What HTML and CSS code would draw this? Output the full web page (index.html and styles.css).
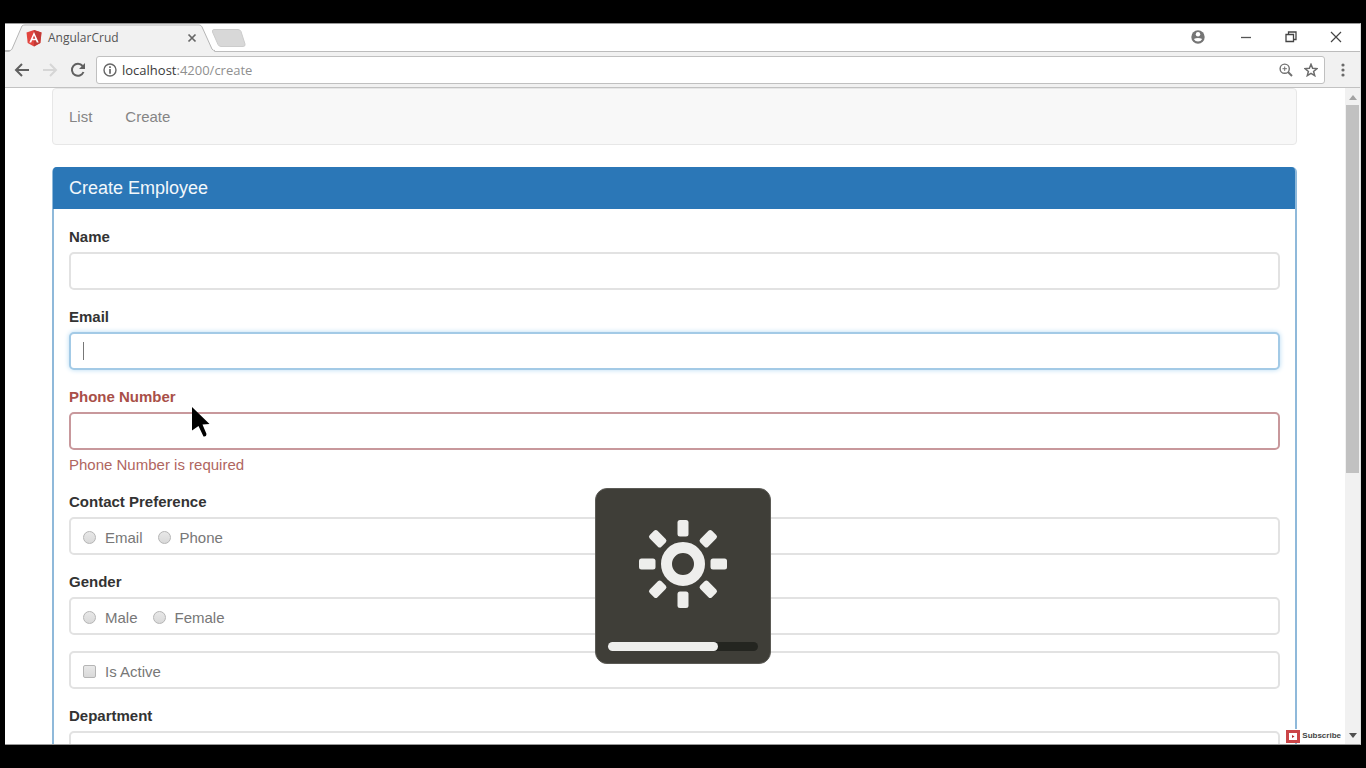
FILE: index.html
```
<!DOCTYPE html>
<html lang="en">
<head>
<meta charset="utf-8">
<title>AngularCrud</title>
<link rel="stylesheet" href="styles.css">
</head>
<body>
<div class="window">
  <header class="titlebar">
    <div class="tab">
      <svg class="tab-shape" viewBox="0 0 210 29" preserveAspectRatio="none"><path d="M4 29 6 27.500 17 2Q18 1 20 1H194Q196 1 197 3L208 27.500 210 29Z" fill="#f1f1f1"/><path d="M0 27.500H5Q6 27.500 7 26L17 2Q18 1 20 1H194Q196 1 197 3L207 26Q208 27.500 210 27.500" fill="none" stroke="#b5b5b5"/></svg>
      <svg class="logo" viewBox="0 0 16 17"><path d="M8 0 15.500 2.600 14.300 13 8 16.600 1.700 13 .5 2.600Z" fill="#e2453f"/><path d="M8 0 15.500 2.600 14.300 13 8 16.600Z" fill="#c23a36"/><path d="M8 2 3.300 12.600H5.200L6.100 10.200H9.900L10.800 12.600H12.700ZM8 5.600 9.300 8.700H6.700Z" fill="#fff" fill-rule="evenodd"/></svg>
      <span class="tab-title">AngularCrud</span>
      <button class="tab-close" aria-label="Close tab"><svg width="10" height="10" viewBox="0 0 10 10"><path d="M1.500 1.500 8.500 8.500M8.500 1.500 1.500 8.500" stroke="#666" stroke-width="1.700"/></svg></button>
    </div>
    <button class="new-tab" aria-label="New tab"><svg width="36" height="18" viewBox="0 0 36 18"><path d="M3 .5H27Q29 .5 30 2.500L34 15Q34.500 17.500 32 17.500H10Q8 17.500 7 15.500L1.500 3Q1 .5 3 .5Z" fill="#d8d8d8" stroke="#cccccc"/></svg></button>
    <div class="controls">
      <button aria-label="Profile"><svg width="14" height="14" viewBox="0 0 14 14"><circle cx="7" cy="7" r="6.700" fill="#757575"/><circle cx="7" cy="4.300" r="2.200" fill="#fff"/><path d="M2.800 9Q7 6.800 11.200 9Q9.800 11.600 7 11.600T2.800 9Z" fill="#fff"/></svg></button>
      <button aria-label="Minimize"><svg width="12" height="12" viewBox="0 0 12 12"><path d="M1 6.500H11" stroke="#555" stroke-width="1.300"/></svg></button>
      <button aria-label="Restore"><svg width="12" height="12" viewBox="0 0 12 12"><path d="M1 3.500H8.500V10.500H1ZM3.500 3V1H11V8.500H9" fill="none" stroke="#444" stroke-width="1.300"/></svg></button>
      <button aria-label="Close"><svg width="12" height="12" viewBox="0 0 12 12"><path d="M1 1 11 11M11 1 1 11" stroke="#444" stroke-width="1.200"/></svg></button>
    </div>
  </header>
  <div class="toolbar">
    <button aria-label="Back"><svg width="16" height="16" viewBox="0 0 16 16"><path d="M15 8H2M8 2 2 8 8 14" fill="none" stroke="#606060" stroke-width="2"/></svg></button>
    <button aria-label="Forward"><svg width="16" height="16" viewBox="0 0 16 16"><path d="M1 8H14M8 2 14 8 8 14" fill="none" stroke="#d6d6d6" stroke-width="2"/></svg></button>
    <button aria-label="Reload"><svg width="16" height="16" viewBox="0 0 16 16"><path d="M13.500 10A6 6 0 1 1 12.600 4" fill="none" stroke="#606060" stroke-width="2"/><path d="M15 1V7H9Z" fill="#606060"/></svg></button>
    <div class="address">
      <svg width="14" height="14" viewBox="0 0 14 14"><circle cx="7" cy="7" r="6" fill="none" stroke="#666" stroke-width="1.400"/><path d="M7 6V10.800M7 3.200V5" stroke="#666" stroke-width="1.700"/></svg>
      <span class="url"><b>localhost</b>:4200/create</span>
      <button aria-label="Zoom"><svg width="14" height="14" viewBox="0 0 14 14"><circle cx="5.700" cy="5.700" r="4.600" fill="none" stroke="#707070" stroke-width="1.400"/><path d="M3.500 5.700H7.900M5.700 3.500V7.900" stroke="#707070"/><path d="M9 9 13 13" stroke="#707070" stroke-width="1.900"/></svg></button>
      <button aria-label="Bookmark"><svg width="14" height="14" viewBox="0 0 14 14"><path d="M7 1.300 8.600 5.200 12.900 5.600 9.600 8.400 10.700 12.600 7 10.300 3.300 12.600 4.400 8.400 1.100 5.600 5.400 5.200Z" fill="none" stroke="#6c6c6c" stroke-width="1.500"/></svg></button>
    </div>
    <button class="menu" aria-label="Menu"><svg width="4" height="14" viewBox="0 0 4 14"><g fill="#6a6a6a"><circle cx="2" cy="2" r="1.600"/><circle cx="2" cy="7" r="1.600"/><circle cx="2" cy="12" r="1.600"/></g></svg></button>
  </div>
  <div class="viewport">
    <main class="page">
      <nav class="navbar"><a href="#list">List</a><a href="#create">Create</a></nav>
      <form class="panel">
        <h1 class="panel-heading">Create Employee</h1>
        <div class="panel-body">
          <div class="group"><label class="caption" for="name">Name</label><input class="field" id="name" type="text"></div>
          <div class="group"><label class="caption" for="email">Email</label><div class="caret-wrap"><input class="field focused" id="email" type="text"><i class="caret"></i></div></div>
          <div class="group error"><label class="caption" for="phone">Phone Number</label><input class="field" id="phone" type="text"><span class="help">Phone Number is required</span></div>
          <div class="group" role="group" aria-labelledby="pref"><span class="caption" id="pref">Contact Preference</span>
            <div class="field options"><label><input type="radio" name="pref">Email</label><label><input type="radio" name="pref">Phone</label></div></div>
          <div class="group" role="group" aria-labelledby="gender"><span class="caption" id="gender">Gender</span>
            <div class="field options"><label><input type="radio" name="gender">Male</label><label><input type="radio" name="gender">Female</label></div></div>
          <div class="group"><div class="field options"><label><input type="checkbox">Is Active</label></div></div>
          <div class="group"><label class="caption" for="dept">Department</label><select class="field" id="dept"></select></div>
        </div>
      </form>
    </main>
    <div class="scrollbar">
      <svg width="8" height="5" viewBox="0 0 8 5"><path d="M0 5 4 0 8 5Z" fill="#a3a3a3"/></svg>
      <div class="track"><div class="thumb"></div></div>
      <svg width="8" height="5" viewBox="0 0 8 5"><path d="M0 0H8L4 5Z" fill="#505050"/></svg>
    </div>
    <button class="subscribe"><svg width="14" height="13" viewBox="0 0 14 13"><path d="M1.500 1.500H12.500V11.500H1.500Z" fill="#fff" stroke="#cb4548" stroke-width="3"/><path d="M6 5V8L8.500 6.500Z" fill="#b3262b"/></svg><span>Subscribe</span></button>
  </div>
</div>
<div class="osd">
  <svg class="sun" viewBox="0 0 88 88"><defs><rect id="ray" x="38.500" y="0" width="11" height="16.500" rx="2.500"/></defs><g fill="#eeeeec"><use href="#ray"/><use href="#ray" transform="rotate(45 44 44)"/><use href="#ray" transform="rotate(90 44 44)"/><use href="#ray" transform="rotate(135 44 44)"/><use href="#ray" transform="rotate(180 44 44)"/><use href="#ray" transform="rotate(225 44 44)"/><use href="#ray" transform="rotate(270 44 44)"/><use href="#ray" transform="rotate(315 44 44)"/></g><circle cx="44" cy="44" r="16.500" fill="none" stroke="#eeeeec" stroke-width="11"/></svg>
  <div class="level"><div class="level-fill" style="width:73.300%"></div></div>
</div>
<svg class="pointer" width="20" height="32" viewBox="0 0 20 32"><path d="M1 0 18.500 17 11.500 17.500 15.500 27Q15.500 30 12.500 29.500L7.500 19 1 23.500Z" fill="#000"/></svg>
</body>
</html>
```
FILE: styles.css
```
* { box-sizing: border-box; }
body { margin: 0; height: 100vh; padding: 23px 5px; background: #000; font: 15px/21px "Liberation Sans", Arial, sans-serif; color: #333; overflow: hidden; }
button { border: 0; padding: 0; background: none; display: flex; align-items: center; justify-content: center; }
svg { display: block; flex: none; }

.window { display: flex; flex-direction: column; height: 100%; background: #fff; overflow: hidden; border-right: 1px solid #ddd; border-bottom: 1px solid #999; border-top: 1px solid #999; }
.titlebar { display: flex; flex: none; height: 28px; border-bottom: 1px solid #bcbcbc; }
.tab { position: relative; display: flex; align-items: center; width: 210px; height: 28px; padding: 0 18px 0 21px; }
.tab-shape { position: absolute; inset: 0; width: 100%; height: 28px; }
.logo { position: relative; width: 16px; height: 17px; }
.tab-title { position: relative; flex: 1; margin-left: 6px; font: 12px/16px "Open Sans", sans-serif; color: #555; }
.tab-close { position: relative; }
.new-tab { margin-left: -4px; }
.controls { display: flex; align-items: center; gap: 33px; margin-left: auto; padding-right: 18px; height: 25px; }
.controls button:first-child { margin-right: 2px; }

.toolbar { display: flex; flex: none; align-items: center; height: 36px; gap: 12px; padding: 0 15px 0 9px; background: #f1f1f1; border-bottom: 1px solid #c2c2c2; }
.address { display: flex; flex: 1; align-items: center; gap: 11px; height: 28px; margin-left: -2px; padding: 0 6px; background: #fff; border: 1px solid #c0c0c0; border-radius: 3px; }
.url { flex: 1; margin-left: -6px; font: 13px/18px "Open Sans", sans-serif; color: #8f8f8f; }
.url b { font-weight: 400; color: #3a3a3a; }
.menu { margin-left: 4px; }

.viewport { position: relative; display: flex; flex: 1; min-height: 0; overflow: hidden; }
.page { flex: 1; padding: 0 48px 0 47px; }
.navbar { display: flex; gap: 33px; height: 57px; padding: 17px 16px; margin-bottom: 22px; background: #f8f8f8; border: 1px solid #e7e7e7; border-radius: 4px; }
.navbar a { color: #858585; text-decoration: none; }
.panel { border: 2px solid #8fb9da; border-radius: 5px 5px 0 0; }
.panel-heading { margin: -2px 0 0 -1px; padding: 10px 16px; border-radius: 4px 4px 0 0; background: #2b77b7; color: #f2f7fb; font-size: 18px; line-height: 22px; font-weight: 400; }
.panel-body { padding: 17px 15px 0; }
.group { display: flex; flex-direction: column; margin-bottom: 16px; }
.caption { margin-bottom: 5px; font-weight: 700; align-self: flex-start; }
.field { width: 100%; height: 38px; padding: 6px 13px; background: #fff; border: 2px solid #e2e2e2; border-radius: 5px; font: inherit; color: #777; outline: 0; }
select.field { appearance: none; }
.focused { border-color: #a3cae6; box-shadow: 0 0 5px #b5daf3; }
.caret-wrap { position: relative; display: flex; }
.caret { position: absolute; left: 14px; top: 10px; width: 1px; height: 18px; background: #777; }
.error .caption { color: #a94f48; }
.error .field { border-color: #c8989c; }
.help { margin-top: 5px; line-height: 20px; color: #b0665f; }
.options { display: flex; align-items: center; gap: 15px; padding: 3px 12px 0; }
.options label { display: flex; align-items: center; gap: 9px; }
.options input { appearance: none; width: 13px; height: 13px; margin: 0; border: 1px solid #b5b5b5; border-radius: 50%; background: linear-gradient(#e8e8e8, #d9d9d9); }
.options input[type="checkbox"] { border-radius: 2px; }

.scrollbar { display: flex; flex-direction: column; align-items: center; gap: 5px; width: 15px; padding: 7px 0 6px; background: #f1f1f1; }
.track { flex: 1; width: 13px; }
.thumb { height: 59%; background: #c1c1c1; }
.subscribe { position: absolute; right: 17px; bottom: 1px; height: 14px; gap: 2px; padding-right: 2px; background: #fff; color: #444; font: 700 8px/14px "Liberation Sans Narrow", "Liberation Sans", sans-serif; }

.osd { position: absolute; left: 50%; top: 50%; display: flex; flex-direction: column; align-items: center; justify-content: space-between; width: 176px; height: 176px; margin: 104px 0 0 -88px; padding: 31px 12px 12px; background: #3f3e38; border: 1px solid #5b5a55; border-radius: 12px; }
.sun { width: 88px; height: 88px; }
.level { width: 100%; height: 9px; background: #242520; border-radius: 5px; }
.level-fill { height: 100%; background: #eeeeec; border-radius: 5px; }
.pointer { position: absolute; left: 191px; top: 407px; }
```
